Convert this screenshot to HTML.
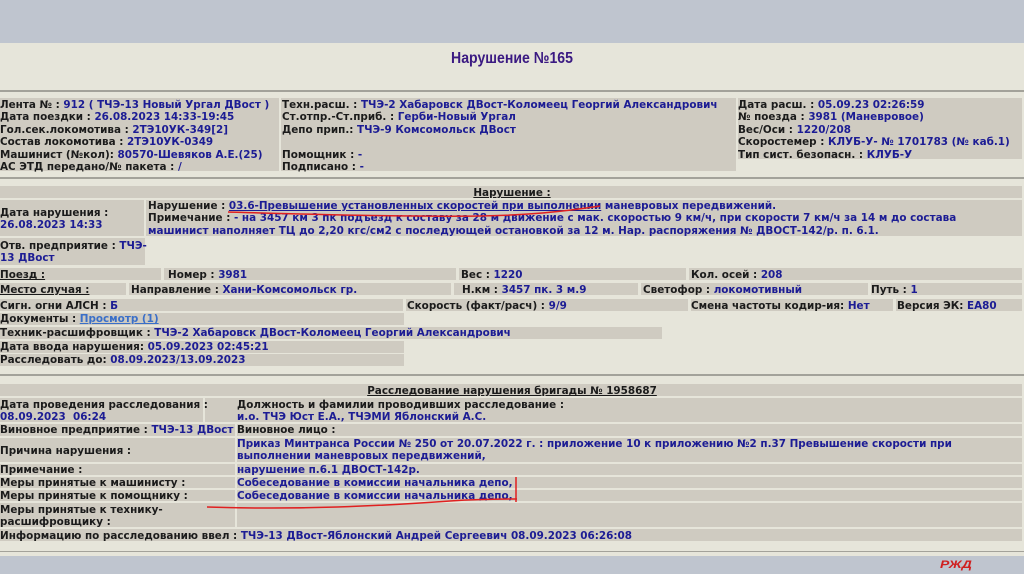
<!DOCTYPE html>
<html><head><meta charset="utf-8"><style>
*{margin:0;padding:0;box-sizing:border-box}
body{width:1024px;height:574px;overflow:hidden;background:#e6e5da;position:relative;font-family:"DejaVu Sans","Liberation Sans",sans-serif;font-weight:bold;font-size:10.4px;color:#1b1b1b;line-height:12.4px}
.a{position:absolute;white-space:nowrap;margin-top:1px}
.g{position:absolute;background:#cfcbc1}
.v{color:#1c1c94}
.hl{position:absolute;left:0;width:1024px;height:2px;background:#a3a29a}
u{text-decoration:underline}
</style></head><body>
<div style="position:absolute;left:0;top:0;width:1024px;height:43px;background:#bfc5cf"></div>
<div class="a" style="left:0;width:1024px;top:49px;text-align:center;font-family:'Liberation Sans',sans-serif;font-size:16px;line-height:18px;color:#3b1a82;transform:scaleX(.88)">Нарушение №165</div>
<div class="hl" style="top:90px"></div>

<div class="g" style="left:0;top:98px;width:279px;height:73px"></div>
<div class="g" style="left:281px;top:98px;width:455px;height:73px"></div>
<div class="g" style="left:738px;top:98px;width:284px;height:61px"></div>
<div class="a" style="left:0;top:98px">Лента № : <span class="v">912 ( ТЧЭ-13 Новый Ургал ДВост )</span><br>Дата поездки : <span class="v">26.08.2023 14:33-19:45</span><br>Гол.сек.локомотива : <span class="v">2ТЭ10УК-349[2]</span><br>Состав локомотива : <span class="v">2ТЭ10УК-0349</span><br>Машинист (№кол): <span class="v">80570-Шевяков А.Е.(25)</span><br>АС ЭТД передано/№ пакета : <span class="v">/</span></div>
<div class="a" style="left:282px;top:98px">Техн.расш. : <span class="v">ТЧЭ-2 Хабаровск ДВост-Коломеец Георгий Александрович</span><br>Ст.отпр.-Ст.приб. : <span class="v">Герби-Новый Ургал</span><br>Депо прип.: <span class="v">ТЧЭ-9 Комсомольск ДВост</span><br>&nbsp;<br>Помощник : <span class="v">-</span><br>Подписано : <span class="v">-</span></div>
<div class="a" style="left:738px;top:98px">Дата расш. : <span class="v">05.09.23 02:26:59</span><br>№ поезда : <span class="v">3981 (Маневровое)</span><br>Вес/Оси : <span class="v">1220/208</span><br>Скоростемер : <span class="v">КЛУБ-У- № 1701783 (№ каб.1)</span><br>Тип сист. безопасн. : <span class="v">КЛУБ-У</span></div>
<div class="hl" style="top:177px"></div>

<div class="g" style="left:0;top:186px;width:1022px;height:12px"></div>
<div class="a" style="left:0;width:1024px;top:186px;text-align:center"><u>Нарушение :</u></div>
<div class="g" style="left:0;top:200px;width:144px;height:36px"></div>
<div class="g" style="left:146px;top:200px;width:876px;height:36px"></div>
<div class="a" style="left:0;top:206px">Дата нарушения :<br><span class="v">26.08.2023 14:33</span></div>
<div class="a v" style="left:148px;top:199px"><span style="color:#1b1b1b">Нарушение : </span><u>03.6-Превышение установленных скоростей при выполнении</u> маневровых передвижений.<br><span style="color:#1b1b1b">Примечание : </span>- на 3457 км 3 пк подъезд к составу за 28 м движение с мак. скоростью 9 км/ч, при скорости 7 км/ч за 14 м до состава<br>машинист наполняет ТЦ до 2,20 кгс/см2 с последующей остановкой за 12 м. Нар. распоряжения № ДВОСТ-142/р. п. 6.1.</div>
<div class="g" style="left:0;top:238px;width:145px;height:27px"></div>
<div class="a" style="left:0;top:239px">Отв. предприятие : <span class="v">ТЧЭ-</span><br><span class="v">13 ДВост</span></div>

<div class="g" style="left:0;top:268px;width:161px;height:12px"></div><div class="g" style="left:164px;top:268px;width:292px;height:12px"></div><div class="g" style="left:459px;top:268px;width:227px;height:12px"></div><div class="g" style="left:689px;top:268px;width:333px;height:12px"></div>
<div class="a" style="left:0;top:268px"><u>Поезд :</u></div><div class="a" style="left:168px;top:268px">Номер : <span class="v">3981</span></div><div class="a" style="left:461px;top:268px">Вес : <span class="v">1220</span></div><div class="a" style="left:691px;top:268px">Кол. осей : <span class="v">208</span></div>

<div class="g" style="left:0;top:283px;width:126px;height:12px"></div><div class="g" style="left:129px;top:283px;width:322px;height:12px"></div><div class="g" style="left:454px;top:283px;width:184px;height:12px"></div><div class="g" style="left:641px;top:283px;width:227px;height:12px"></div><div class="g" style="left:871px;top:283px;width:151px;height:12px"></div>
<div class="a" style="left:0;top:283px"><u>Место случая :</u></div><div class="a" style="left:131px;top:283px">Направление : <span class="v">Хани-Комсомольск гр.</span></div><div class="a" style="left:462px;top:283px">Н.км : <span class="v">3457 пк. 3 м.9</span></div><div class="a" style="left:643px;top:283px">Светофор : <span class="v">локомотивный</span></div><div class="a" style="left:871px;top:283px">Путь : <span class="v">1</span></div>

<div class="g" style="left:0;top:299px;width:403px;height:12px"></div><div class="g" style="left:406px;top:299px;width:282px;height:12px"></div><div class="g" style="left:691px;top:299px;width:202px;height:12px"></div><div class="g" style="left:896px;top:299px;width:126px;height:12px"></div>
<div class="a" style="left:0;top:299px">Сигн. огни АЛСН : <span class="v">Б</span></div><div class="a" style="left:407px;top:299px">Скорость (факт/расч) : <span class="v">9/9</span></div><div class="a" style="left:691px;top:299px">Смена частоты кодир-ия: <span class="v">Нет</span></div><div class="a" style="left:897px;top:299px">Версия ЭК: <span class="v">ЕА80</span></div>

<div class="g" style="left:0;top:313px;width:404px;height:12px"></div>
<div class="a" style="left:0;top:312px">Документы : <u style="color:#3a6fc8">Просмотр (1)</u></div>
<div class="g" style="left:0;top:327px;width:662px;height:12px"></div>
<div class="a" style="left:0;top:326px">Техник-расшифровщик : <span class="v">ТЧЭ-2 Хабаровск ДВост-Коломеец Георгий Александрович</span></div>
<div class="g" style="left:0;top:341px;width:404px;height:12px"></div>
<div class="a" style="left:0;top:340px">Дата ввода нарушения: <span class="v">05.09.2023 02:45:21</span></div>
<div class="g" style="left:0;top:354px;width:404px;height:12px"></div>
<div class="a" style="left:0;top:353px">Расследовать до: <span class="v">08.09.2023/13.09.2023</span></div>
<div class="hl" style="top:374px"></div>

<div class="g" style="left:0;top:384px;width:1022px;height:12px"></div>
<div class="a" style="left:0;width:1024px;top:384px;text-align:center"><u>Расследование нарушения бригады № 1958687</u></div>
<div class="g" style="left:0;top:398px;width:203px;height:24px"></div><div class="g" style="left:205px;top:398px;width:817px;height:24px"></div>
<div class="a" style="left:0;top:398px">Дата проведения расследования :<br><span class="v">08.09.2023&nbsp; 06:24</span></div>
<div class="a" style="left:237px;top:398px">Должность и фамилии проводивших расследование :<br><span class="v">и.о. ТЧЭ Юст Е.А., ТЧЭМИ Яблонский А.С.</span></div>
<div class="g" style="left:0;top:424px;width:235px;height:12px"></div><div class="g" style="left:237px;top:424px;width:785px;height:12px"></div>
<div class="a" style="left:0;top:423px">Виновное предприятие : <span class="v">ТЧЭ-13 ДВост</span></div><div class="a" style="left:237px;top:423px">Виновное лицо :</div>
<div class="g" style="left:0;top:438px;width:235px;height:24px"></div><div class="g" style="left:237px;top:438px;width:785px;height:24px"></div>
<div class="a" style="left:0;top:444px">Причина нарушения :</div>
<div class="a v" style="left:237px;top:437px">Приказ Минтранса России № 250 от 20.07.2022 г. : приложение 10 к приложению №2 п.37 Превышение скорости при<br>выполнении маневровых передвижений,</div>
<div class="g" style="left:0;top:464px;width:235px;height:11px"></div><div class="g" style="left:237px;top:464px;width:785px;height:11px"></div>
<div class="a" style="left:0;top:463px">Примечание :</div><div class="a v" style="left:237px;top:463px">нарушение п.6.1 ДВОСТ-142р.</div>
<div class="g" style="left:0;top:477px;width:235px;height:11px"></div><div class="g" style="left:237px;top:477px;width:785px;height:11px"></div>
<div class="a" style="left:0;top:476px">Меры принятые к машинисту :</div><div class="a v" style="left:237px;top:476px">Собеседование в комиссии начальника депо,</div>
<div class="g" style="left:0;top:490px;width:235px;height:11px"></div><div class="g" style="left:237px;top:490px;width:785px;height:11px"></div>
<div class="a" style="left:0;top:489px">Меры принятые к помощнику :</div><div class="a v" style="left:237px;top:489px">Собеседование в комиссии начальника депо,</div>
<div class="g" style="left:0;top:503px;width:235px;height:24px"></div><div class="g" style="left:237px;top:503px;width:785px;height:24px"></div>
<div class="a" style="left:0;top:503px">Меры принятые к технику-<br>расшифровщику :</div>
<div class="g" style="left:0;top:529px;width:1022px;height:12px"></div>
<div class="a" style="left:0;top:529px">Информацию по расследованию ввел : <span class="v">ТЧЭ-13 ДВост-Яблонский Андрей Сергеевич 08.09.2023 06:26:08</span></div>
<div class="hl" style="top:551px;height:1px"></div>
<div style="position:absolute;left:0;top:556px;width:1024px;height:18px;background:#bfc5cf"></div>
<svg style="position:absolute;left:0;top:0" width="1024" height="574">
<path d="M228 212 C300 214 400 217 480 216 C530 215 560 212 600 206" stroke="#e02020" stroke-width="1.5" fill="none"/>
<path d="M207 507 C300 510 380 506 450 501 C480 499 500 499 517 499 M516 477 L516 502" stroke="#e02020" stroke-width="1.5" fill="none"/>
<text x="940" y="568" font-family="Liberation Sans" font-style="italic" font-weight="bold" font-size="14" fill="#d02020" transform="scale(1,0.8) translate(0,142)">РЖД</text>
</svg>
</body></html>
